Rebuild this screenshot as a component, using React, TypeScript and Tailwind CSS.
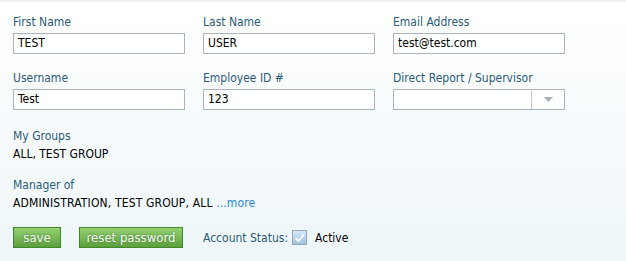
const font = { fontFamily: '"DejaVu Sans Condensed", "DejaVu Sans", sans-serif', fontStretch: 'condensed' };

function Field({ label, value }: { label: string; value: string }) {
  return (
    <div className="flex flex-col w-[172px]">
      <label className="text-[12px] leading-[15px] text-[#2c5b78] mb-[3px]">{label}</label>
      <div className="h-[21px] border border-[#a9b4c0] bg-white px-[4px] text-[12px] leading-[19px] text-black">
        {value}
      </div>
    </div>
  );
}

function SelectField({ label }: { label: string }) {
  return (
    <div className="flex flex-col w-[172px]">
      <label className="text-[12px] leading-[15px] text-[#2c5b78] mb-[3px]">{label}</label>
      <div className="h-[21px] border border-[#a9b4c0] bg-white flex">
        <div className="flex-1" />
        <div className="w-[33px] border-l border-[#c3cbd4] flex items-center justify-center">
          <svg width="9" height="5" viewBox="0 0 9 5">
            <path d="M0 0h9L4.5 5z" fill="#a7b0ba" />
          </svg>
        </div>
      </div>
    </div>
  );
}

export default function App() {
  return (
    <div
      className="w-[626px] h-[261px] bg-gradient-to-b from-white to-[#eef6fa] relative overflow-hidden"
      style={font}
    >
      <div className="absolute top-0 left-0 right-0 h-[3px] bg-gradient-to-b from-[#e6e9ec] to-transparent" />
      <div className="pl-[13px] pt-[15px] flex flex-col">
        <div className="flex gap-[18px]">
          <Field label="First Name" value="TEST" />
          <Field label="Last Name" value="USER" />
          <Field label="Email Address" value="test@test.com" />
        </div>
        <div className="flex gap-[18px] mt-[17px]">
          <Field label="Username" value="Test" />
          <Field label="Employee ID #" value="123" />
          <SelectField label="Direct Report / Supervisor" />
        </div>
        <div className="mt-[17px] text-[12px] leading-[18px]">
          <div className="text-[#2c5b78]">My Groups</div>
          <div className="text-black">ALL, TEST GROUP</div>
        </div>
        <div className="mt-[13px] text-[12px] leading-[18px]">
          <div className="text-[#2c5b78]">Manager of</div>
          <div className="text-black tracking-[0.15px]">
            ADMINISTRATION, TEST GROUP, ALL <span className="text-[#1e8ccf]">...more</span>
          </div>
        </div>
        <div className="mt-[15px] flex items-center text-[12px]">
          <button className="h-[21px] w-[48px] border border-[#3f8a26] bg-gradient-to-b from-[#94d26f] to-[#5c9f3e] text-white text-[13px] [text-shadow:0_0_2px_#2f6a1a]">
            save
          </button>
          <button className="ml-[18px] h-[21px] w-[104px] border border-[#3f8a26] bg-gradient-to-b from-[#94d26f] to-[#5c9f3e] text-white text-[13px] [text-shadow:0_0_2px_#2f6a1a]">
            reset password
          </button>
          <span className="ml-[20px] text-[#2c5b78]">Account Status:</span>
          <span className="ml-[4px] w-[15px] h-[15px] border border-[#9aa5b1] bg-gradient-to-b from-[#d6e8f5] to-[#9cc3e2] flex items-center justify-center">
            <svg width="11" height="10" viewBox="0 0 11 10">
              <path d="M1.5 5l3 3L10 1.5" stroke="white" strokeWidth="1.8" fill="none" />
            </svg>
          </span>
          <span className="ml-[8px] text-black">Active</span>
        </div>
      </div>
    </div>
  );
}
